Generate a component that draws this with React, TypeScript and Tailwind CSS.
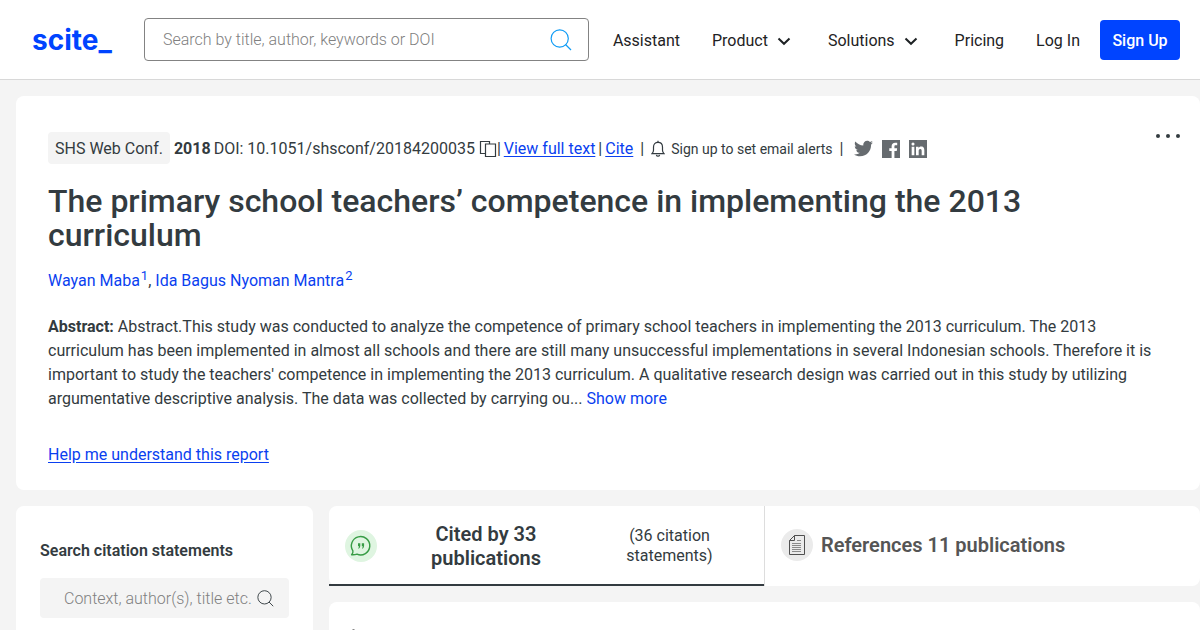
import type { ReactNode } from "react";
import { FaTwitter } from "react-icons/fa";

function SearchIcon({ className }: { className: string }) {
  return (
    <svg viewBox="0 0 22 22" fill="none" stroke="currentColor" strokeWidth="1.2" className={className} aria-hidden="true">
      <circle cx="9.7" cy="9.5" r="8.6" />
      <path d="M15.5 15.5 21 21" />
    </svg>
  );
}

function Chevron() {
  return (
    <svg viewBox="0 0 24 24" fill="none" stroke="currentColor" strokeWidth="2" className="size-6" aria-hidden="true">
      <path d="M6.5 9.5 12 14.8l5.5-5.3" />
    </svg>
  );
}

function CopyIcon() {
  return (
    <svg viewBox="0 0 18 18" fill="none" stroke="currentColor" strokeWidth="1.2" className="size-[18px]" aria-hidden="true">
      <path d="M6.5 13.5h-5v-12h9V4" />
      <path d="M6.5 4h10v12.5h-10z" />
    </svg>
  );
}

function BellIcon() {
  return (
    <svg viewBox="0 0 14 18" fill="none" stroke="currentColor" strokeWidth="1.2" className="h-[18px] w-[14px]" aria-hidden="true">
      <path d="M1 13.6c1.1-.9 1.5-1.8 1.5-3.3V7c0-2.7 1.8-4.6 4.5-4.6S11.5 4.3 11.5 7v3.3c0 1.5.4 2.4 1.5 3.3z" />
      <path d="M7 2.4V.8M5.4 14.8c.2 1 .8 1.4 1.6 1.4s1.4-.4 1.6-1.4" />
    </svg>
  );
}

function FacebookIcon() {
  return (
    <svg viewBox="0 0 24 24" fill="currentColor" className="size-[18px]" aria-hidden="true">
      <path d="M0 0h24v24h-7.44v-9.285h3.12l.465-3.63H16.56V8.774c0-1.05.292-1.771 1.792-1.771h1.921v-3.24c-.332-.044-1.471-.141-2.796-.141-2.765 0-4.659 1.686-4.659 4.785v2.678H9.689v3.621h3.129V24H0z" />
    </svg>
  );
}

function LinkedinIcon() {
  return (
    <svg viewBox="0 0 24 24" fill="currentColor" className="size-[18px]" aria-hidden="true">
      <path
        fillRule="evenodd"
        d="M0 0h24v24H0zM20.447 20.452v-6.286c0-3.085-.666-5.455-4.267-5.455-1.733 0-2.893.95-3.37 1.85h-.046V9H9.351v11.452h3.554v-5.667c0-1.494.283-2.939 2.136-2.939 1.825 0 1.852 1.709 1.852 3.037v5.569zM5.337 7.433a2.064 2.064 0 1 0 0-4.128 2.064 2.064 0 0 0 0 4.128zM3.555 9v11.452h3.564V9z"
      />
    </svg>
  );
}

function QuoteBubble() {
  return (
    <svg viewBox="0 0 32 32" fill="none" stroke="#379c45" strokeWidth="1.4" className="size-8" aria-hidden="true">
      <path d="M6.6 24.7c1.2-1.3 1.6-2.4 1.3-3.900A9.2 9.2 0 1 1 12 24.200c-1.7.5-3.3.7-5.4.5z" strokeLinejoin="round" />
      <path fill="#379c45" stroke="none" d="M13 13.200h2.300v2.400c0 1.600-.6 2.600-1.700 3.100l-.4-.6c.6-.4.8-.9.8-1.800h-1zM16.800 13.200h2.300v2.400c0 1.600-.6 2.600-1.700 3.100l-.4-.6c.6-.4.8-.9.8-1.800h-1z" />
    </svg>
  );
}

function PaperIcon() {
  return (
    <svg viewBox="0 0 32 32" fill="none" className="size-8" aria-hidden="true">
      <path stroke="#505050" d="M13.5 6.5h10v19h-15v-14z" />
      <path stroke="#505050" d="M13.5 6.5v5h-5" />
      <path stroke="#8a8a8a" d="M16 11.5h4M11 14.500h9M11 16.500h9M11 18.500h9M11 20.500h9M11 22.500h9" />
    </svg>
  );
}

function Link({ children, underline }: { children: ReactNode; underline?: boolean }) {
  return (
    <a href="#" className={underline ? "text-[#0a3ff0] underline underline-offset-2" : "text-[#0a3ff0]"}>
      {children}
    </a>
  );
}

function Header() {
  return (
    <header className="flex h-20 items-center border-b border-[#d8d8d8] bg-white pr-5 pl-8 text-[#1e2224]">
      <a href="#" className="w-28 font-['Inter'] text-[28px] leading-8 font-bold text-[#0044ff]">
        scite_
      </a>
      <form className="flex h-[43px] flex-1 items-center rounded border border-[#838383] pr-3 pl-[18px]">
        <input
          aria-label="Search by title, author, keywords or DOI"
          placeholder="Search by title, author, keywords or DOI"
          className="min-w-0 flex-1 font-light outline-none placeholder:text-[#808080]"
        />
        <button type="button" aria-label="Search" className="p-1 text-[#109cf5]">
          <SearchIcon className="size-[22px]" />
        </button>
      </form>
      <nav className="ml-6 flex items-center gap-8 pt-[2px]">
        <a href="#">Assistant</a>
        <button type="button" className="flex items-center gap-1">
          Product <Chevron />
        </button>
        <button type="button" className="flex items-center gap-1">
          Solutions <Chevron />
        </button>
        <a href="#">Pricing</a>
        <a href="#">Log In</a>
      </nav>
      <a href="#" className="ml-5 flex h-10 min-w-20 items-center justify-center rounded bg-[#0044ff] px-3 pt-[2px] font-medium text-white">
        Sign Up
      </a>
    </header>
  );
}

function Paper() {
  return (
    <article className="rounded-lg bg-white px-8 pt-9 pb-6">
      <div className="flex items-start justify-between">
        <div className="flex h-8 items-center whitespace-nowrap">
          <span className="flex h-8 items-center rounded bg-[#f4f4f4] px-[7px] pt-px">SHS Web Conf.</span>
          <div className="flex items-center pt-px">
            <b className="ml-1 font-bold">2018</b>
            <span className="ml-[3px]">DOI: 10.1051/shsconf/20184200035</span>
            <button type="button" aria-label="Copy DOI" className="ml-1">
              <CopyIcon />
            </button>
            <span className="mr-[3px]">|</span>
            <Link underline>View full text</Link>
            <span className="mx-[3px]">|</span>
            <Link underline>Cite</Link>
            <span className="mx-[7px]">|</span>
            <button type="button" className="flex items-center gap-[6px] text-sm">
              <BellIcon />
              Sign up to set email alerts
            </button>
            <span className="mx-[7px]">|</span>
            <span className="ml-1 flex items-center gap-[9px] text-[#666b6f]">
              <a href="#" aria-label="Twitter"><FaTwitter className="size-[19px]" /></a>
              <a href="#" aria-label="Facebook"><FacebookIcon /></a>
              <a href="#" aria-label="LinkedIn"><LinkedinIcon /></a>
            </span>
          </div>
        </div>
        <button type="button" aria-label="More options" className="-mr-3 flex h-2 items-center gap-[6px]">
          <i className="size-1 rounded-full bg-[#333b40]" />
          <i className="size-1 rounded-full bg-[#333b40]" />
          <i className="size-1 rounded-full bg-[#333b40]" />
        </button>
      </div>
      <h1 className="mt-5 text-[32px] leading-[34px] font-medium">
        The primary school teachers’ competence in implementing the 2013 curriculum
      </h1>
      <p className="mt-[17px]">
        <Link>Wayan Maba<sup className="ml-px text-[13px]">1</sup></Link>,{" "}
        <Link>Ida Bagus Nyoman Mantra<sup className="ml-px text-[13px]">2</sup></Link>
      </p>
      <p className="mt-[22px]">
        <b className="font-bold">Abstract:</b> Abstract.This study was conducted to analyze the competence of primary
        school teachers in implementing the 2013 curriculum. The 2013 curriculum has been implemented in almost all schools
        and there are still many unsuccessful implementations in several Indonesian schools. Therefore it is important to
        study the teachers' competence in implementing the 2013 curriculum. A qualitative research design was carried out
        in this study by utilizing argumentative descriptive analysis. The data was collected by carrying ou...{" "}
        <Link>Show more</Link>
      </p>
      <p className="mt-8 -mb-px">
        <Link underline>Help me understand this report</Link>
      </p>
    </article>
  );
}

export default function App() {
  return (
    <div className="min-h-screen bg-[#f4f4f4] font-['Roboto',sans-serif] text-base text-[#333b40]">
      <Header />
      <main className="flex flex-col gap-4 pt-4 pl-4">
        <Paper />
        <div className="flex gap-4">
          <aside className="w-[297px] shrink-0 rounded-lg bg-white p-6 pt-[33px]">
            <label htmlFor="statements" className="block font-semibold">
              Search citation statements
            </label>
            <div className="mt-[15px] flex h-10 items-center rounded bg-[#f4f4f4] pt-px pr-[15px] pl-6">
              <input
                id="statements"
                placeholder="Context, author(s), title etc."
                className="min-w-0 flex-1 font-light outline-none placeholder:text-[#808080]"
              />
              <button type="button" aria-label="Search statements">
                <SearchIcon className="size-[17px]" />
              </button>
            </div>
          </aside>
          <section className="flex flex-1 flex-col gap-4">
            <div className="flex h-20 rounded-lg bg-white">
              <button type="button" className="flex flex-1 items-center border-b-2 border-[#333b40] px-4 pt-[2px]">
                <span className="size-8 rounded-full bg-[#dff5e1]"><QuoteBubble /></span>
                <span className="ml-2 w-[202px] px-8 text-xl leading-6 font-semibold">
                  Cited by 33 publications
                </span>
                <span className="ml-1 flex-1 px-8 leading-5">(36 citation statements)</span>
              </button>
              <button type="button" className="flex flex-1 items-center gap-2 border-l border-[#dddddd] px-4 pb-[2px] text-[#555555]">
                <span className="size-8 rounded-full bg-[#ebebeb]"><PaperIcon /></span>
                <span className="text-xl leading-6 font-semibold">References 11 publications</span>
              </button>
            </div>
            <div className="flex-1 rounded-t-lg bg-white px-[18px] pt-[26px]">
              <svg viewBox="0 0 12 12" fill="none" stroke="#8a8a8a" className="size-3" aria-hidden="true">
                <path d="M6.5 1v10M2 5.5 6.5 1 11 5.5" />
              </svg>
            </div>
          </section>
        </div>
      </main>
    </div>
  );
}
